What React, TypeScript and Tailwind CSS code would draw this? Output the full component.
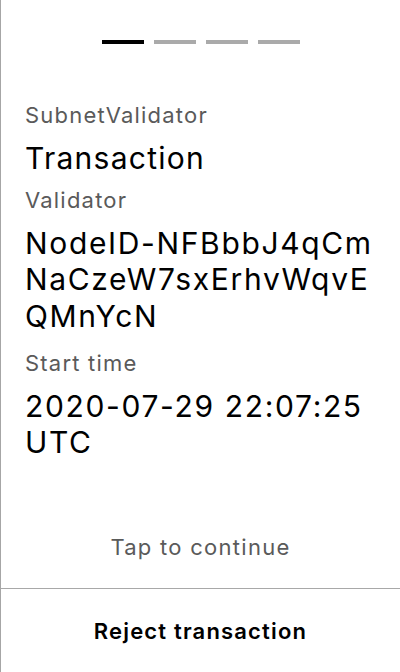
import React from "react";

export default function App() {
  const font = { fontFamily: "Inter, 'Noto Sans', sans-serif" };
  return (
    <div
      className="h-[672px] w-[400px] bg-white border-l border-[#a6a6a6] flex flex-col text-black"
      style={font}
    >
      <div className="pt-[40px] flex justify-center gap-[10px]">
        <div className="h-[4px] w-[42px] bg-black" />
        <div className="h-[4px] w-[42px] bg-[#aaaaaa]" />
        <div className="h-[4px] w-[42px] bg-[#aaaaaa]" />
        <div className="h-[4px] w-[42px] bg-[#aaaaaa]" />
      </div>
      <div className="pl-[24px] pr-[16px] pt-[57px] flex flex-col">
        <div className="text-[22px] leading-[28px] tracking-[0.055em] text-[#5a5a5a]">SubnetValidator</div>
        <div className="mt-[10.5px] text-[30px] leading-[36px] tracking-[0.042em]">Transaction</div>
        <div className="mt-[10.5px] text-[22px] leading-[28px] tracking-[0.055em] text-[#5a5a5a]">Validator</div>
        <div className="mt-[10.5px] text-[30px] leading-[36.5px] tracking-[0.055em] break-all">
          NodeID-NFBbbJ4qCmNaCzeW7sxErhvWqvEQMnYcN
        </div>
        <div className="mt-[15px] text-[22px] leading-[28px] tracking-[0.055em] text-[#5a5a5a]">Start time</div>
        <div className="mt-[10.5px] text-[30px] leading-[36.5px] tracking-[0.055em]">2020-07-29 22:07:25 UTC</div>
      </div>
      <div className="flex-1" />
      <div className="pb-[27px] text-center text-[22px] leading-[28px] tracking-[0.058em] text-[#5a5a5a]">
        Tap to continue
      </div>
      <div className="h-[84px] border-t border-[#a8a8a8] flex items-center justify-center">
        <span className="text-[22px] font-semibold leading-[28px] tracking-[0.053em]">Reject transaction</span>
      </div>
    </div>
  );
}
